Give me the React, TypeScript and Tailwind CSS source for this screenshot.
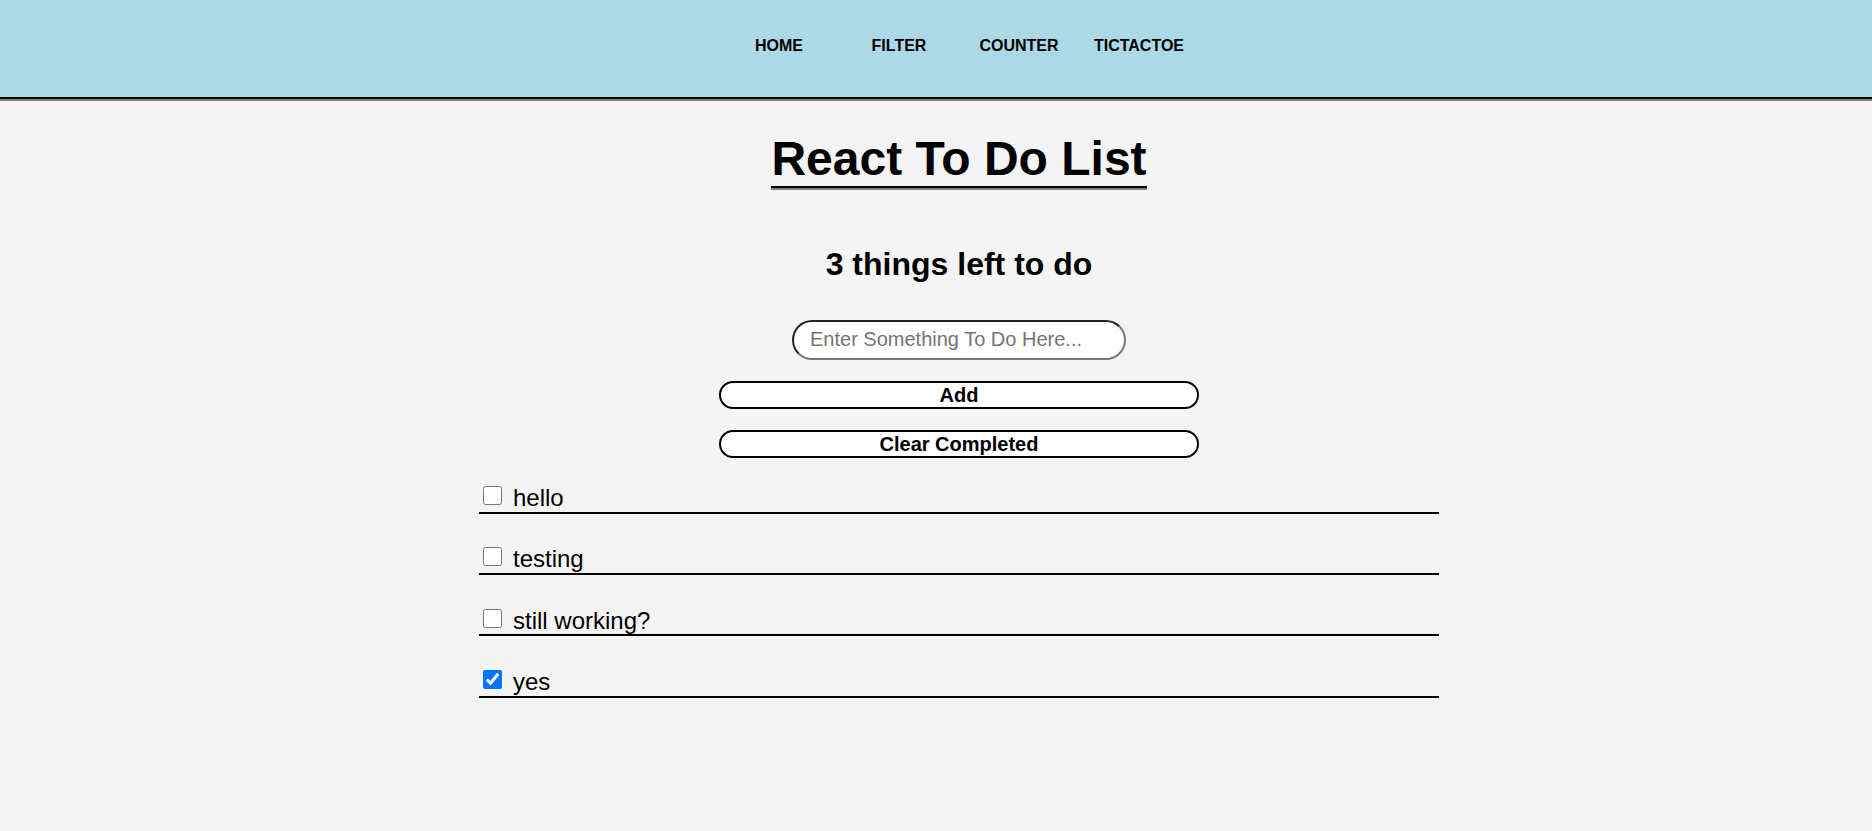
import { useState } from 'react';

interface Todo {
    id: number;
    text: string;
    done: boolean;
}

const navLinks = ['HOME', 'FILTER', 'COUNTER', 'TICTACTOE'];

export default function App() {
    const [todos, setTodos] = useState<Todo[]>([
        { id: 1, text: 'hello', done: false },
        { id: 2, text: 'testing', done: false },
        { id: 3, text: 'still working?', done: false },
        { id: 4, text: 'yes', done: true },
    ]);
    const [input, setInput] = useState('');

    const left = todos.filter(t => !t.done).length;

    const addTodo = () => {
        if (!input.trim()) return;
        setTodos(prev => [...prev, { id: Date.now(), text: input, done: false }]);
        setInput('');
    };

    const toggle = (id: number) => {
        setTodos(prev => prev.map(t => (t.id === id ? { ...t, done: !t.done } : t)));
    };

    return (
        <div className="min-h-screen bg-[#f4f4f4] text-black font-['Liberation_Sans',Arial,sans-serif]">
            <header className="h-[99px] bg-[#add8e6] border-b-2 border-black shadow-[0_2px_0_#808080] pl-[46px]">
                <ul className="flex justify-center pt-[37px]">
                    {navLinks.map(link => (
                        <li key={link} className="w-[120px] text-center text-[16px] font-bold leading-[18px]">
                            {link}
                        </li>
                    ))}
                </ul>
            </header>

            <main className="flex flex-col items-center pl-[46px] pt-[33px]">
                <h1 className="text-[48px] font-bold leading-[53.6px] border-b-2 border-black shadow-[0_2px_0_#808080]">
                    React To Do List
                </h1>

                <h2 className="mt-[58px] text-[32px] font-bold leading-[36px]">{left} things left to do</h2>

                <input
                    value={input}
                    onChange={e => setInput(e.target.value)}
                    placeholder="Enter Something To Do Here..."
                    className="mt-[38px] w-[334px] h-[40px] rounded-[20px] bg-white border-2 border-[#222] border-r-[#777] border-b-[#777] pl-4 text-[20px] placeholder:text-[#757575] outline-none"
                />

                <button
                    onClick={addTodo}
                    className="mt-[21px] h-[28px] w-[480px] rounded-full bg-white border-2 border-black text-[20px] font-bold leading-[22px]"
                >
                    Add
                </button>
                <button
                    onClick={() => setTodos(prev => prev.filter(t => !t.done))}
                    className="mt-[21px] h-[28px] w-[480px] rounded-full bg-white border-2 border-black text-[20px] font-bold leading-[22px]"
                >
                    Clear Completed
                </button>

                <ul className="mt-[22px] w-[960px] flex flex-col gap-[27.33px]">
                    {todos.map(todo => (
                        <li key={todo.id} className="h-[34px] flex items-center border-b-2 border-black">
                            <input
                                type="checkbox"
                                checked={todo.done}
                                onChange={() => toggle(todo.id)}
                                className="ml-[4px] w-[19px] h-[19px] accent-[#0075ff]"
                            />
                            <span className="ml-[11px] text-[24px] leading-[27px] pt-[4px]">{todo.text}</span>
                        </li>
                    ))}
                </ul>
            </main>
        </div>
    );
}
